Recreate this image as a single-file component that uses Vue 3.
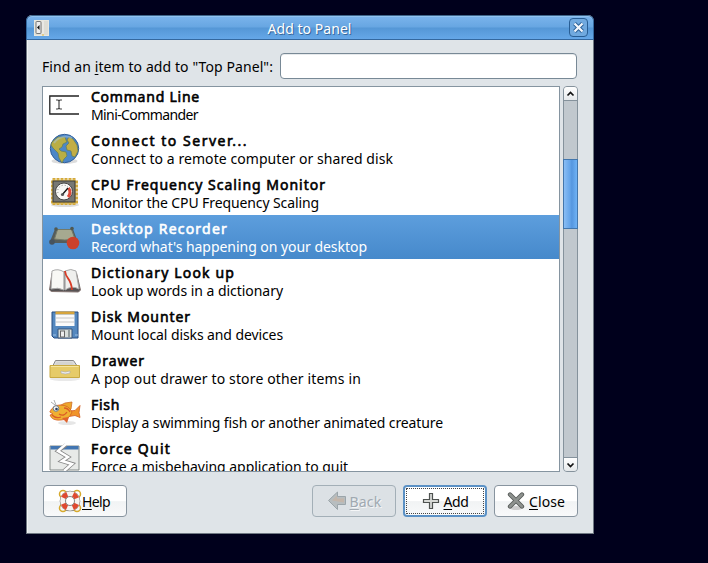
<script setup>
const items = [
  { icon: 'command', name: 'Command Line', text: 'Mini-Commander', a: 109, b: 107 },
  { icon: 'globe', name: 'Connect to Server...', text: 'Connect to a remote computer or shared disk', a: 157, b: 302 },
  { icon: 'cpu', name: 'CPU Frequency Scaling Monitor', text: 'Monitor the CPU Frequency Scaling', a: 235, b: 228 },
  { icon: 'recorder', name: 'Desktop Recorder', text: "Record what's happening on your desktop", a: 137, b: 276, selected: true },
  { icon: 'book', name: 'Dictionary Look up', text: 'Look up words in a dictionary', a: 144, b: 192 },
  { icon: 'disk', name: 'Disk Mounter', text: 'Mount local disks and devices', a: 100, b: 192 },
  { icon: 'drawer', name: 'Drawer', text: 'A pop out drawer to store other items in', a: 54, b: 270 },
  { icon: 'fish', name: 'Fish', text: 'Display a swimming fish or another animated creature', a: 29, b: 352 },
  { icon: 'quit', name: 'Force Quit', text: 'Force a misbehaving application to quit', a: 80, b: 257 },
]

// Tracks each label so that it fills its intended line width.
const vFit = {
  mounted(el, { value }) {
    const width = el.getBoundingClientRect().width
    el.style.letterSpacing = (value - width) / el.textContent.length + 'px'
  },
}
</script>

<template>
  <div class="desktop">
    <div class="window">
      <header class="titlebar">
        <svg class="app-icon" width="15" height="16" viewBox="0 0 15 16">
          <rect x=".5" y=".5" width="14" height="15" fill="#deddd5" stroke="#e9e8df" />
          <rect x="2" y="1.500" width="5" height="12" rx="1" fill="#eee" stroke="#777" />
          <path d="M5.500 5v5L3 7.500z" fill="#111" />
          <path d="M9 1v13" stroke="#f4f4f4" />
          <path d="M8 15h2" stroke="#e2b83e" />
        </svg>
        <h1><span v-fit="84">Add to Panel</span></h1>
        <button class="close" aria-label="Close window">
          <svg width="11" height="11" viewBox="0 0 11 11">
            <path d="M1.500 1.500l8 8M9.500 1.500l-8 8" stroke="#275c93" stroke-width="4" />
            <path d="M1.500 1.500l8 8M9.500 1.500l-8 8" stroke="#f2f7fc" stroke-width="2.300" />
          </svg>
        </button>
      </header>

      <main class="content">
        <div class="search">
          <label for="find"><span v-fit="231">Find an <u>i</u>tem to add to "Top Panel":</span></label>
          <input id="find" type="text" />
        </div>

        <div class="browser">
          <div class="list">
            <div class="rows">
              <div v-for="item in items" :key="item.name" class="row" :class="{ selected: item.selected }">
                <svg class="icon" width="32" height="32" viewBox="0 0 32 32">
                  <g v-if="item.icon === 'command'">
                    <path d="M30 7H.8v18H30" fill="none" stroke="#222" stroke-width="1.300" />
                    <path d="M7 11h2l1 1 1-1h2M10 12v7M7 20h2l1-1 1 1h2" fill="none" stroke="#444" stroke-width="1.200" />
                  </g>
                  <g v-else-if="item.icon === 'globe'">
                    <ellipse cx="15.500" cy="28" rx="13" ry="3" fill="#ddd" />
                    <circle cx="15.500" cy="15.500" r="14.200" fill="#4c87c8" stroke="#315f9a" />
                    <path d="M3 9l6-5 7 0 1 3 1 2-4 2-1 3-3 2 2 2 5 1 1 4-3 3-2 4-3-5-1-5-5-5-2-3z" fill="#b9ae45" stroke="#647e55" stroke-width=".7" />
                    <path d="M20 4l4 2 4 6 1 6-3 6-3-1-1-5-4-1-1-4 3-3-2-3z" fill="#c3ae45" stroke="#647e55" stroke-width=".7" />
                    <path d="M5 10c4-6 12-8 18-5" stroke="#a8c7e5" stroke-width="2" fill="none" opacity=".5" />
                  </g>
                  <g v-else-if="item.icon === 'cpu'">
                    <ellipse cx="16" cy="28" rx="14" ry="2" fill="#ddd" />
                    <path d="M5 1v27M9 1v27M13 1v27M17 1v27M21 1v27M25 1v27M2 5h27M2 9h27M2 13h27M2 17h27M2 21h27M2 25h27" stroke="#d2a83c" stroke-width="3" />
                    <path d="M5 2v25M9 2v25M13 2v25M17 2v25M21 2v25M25 2v25" stroke="#e7c351" />
                    <rect x="4" y="4" width="22" height="21" fill="#777773" stroke="#3b3b38" />
                    <circle cx="15" cy="14.500" r="8.500" fill="#f7f7f5" stroke="#444" />
                    <path d="M9 16a6 6 0 0 1 10-6" fill="none" stroke="#888" stroke-dasharray="1 2" />
                    <path d="M19.500 11c2.500 3 1.500 7-.5 9" fill="none" stroke="#dc4938" stroke-width="3" />
                    <path d="M13 18l6-7" stroke="#111" stroke-width="1.300" />
                    <circle cx="13.500" cy="17.500" r="1.600" fill="#555" />
                  </g>
                  <g v-else-if="item.icon === 'recorder'">
                    <path d="M6 8h18l4 11v3H2v-4z" fill="#555d5b" />
                    <path d="M8.500 8.500h14l3.500 9.500q-10 2-20.500 0z" fill="#a6a990" stroke="#747967" />
                    <circle cx="7" cy="8" r="1.800" fill="#505851" /><circle cx="23" cy="7.500" r="1.800" fill="#505851" />
                    <circle cx="3" cy="21" r="2.800" fill="#46535e" />
                    <circle cx="24" cy="22" r="6.300" fill="#cb412b" />
                  </g>
                  <g v-else-if="item.icon === 'book'">
                    <path d="M3 8L.5 25l2 1.500 27 .5 2-2-4-17z" fill="#575354" stroke="#847572" />
                    <path d="M3 6q6-3 12 1v18q-6-3-13-1z" fill="#f8f8f5" stroke="#aaa" />
                    <path d="M16 6q6-3 11 0l3 18q-7-4-14 1z" fill="#efefed" stroke="#aaa" />
                    <path d="M15.500 6v18" stroke="#999" stroke-width="1.500" />
                    <path d="M16 6c1 9 6 6 7 19" fill="none" stroke="#d83b25" stroke-width="1.800" />
                  </g>
                  <g v-else-if="item.icon === 'disk'">
                    <path d="M3 3h26v26H5l-2-2z" fill="#5488bf" stroke="#274c80" />
                    <path d="M6.500 2.500h19v3h-19z" fill="#d6a43c" />
                    <path d="M6.500 5.500h19V17h-19z" fill="#fafafa" />
                    <path d="M7 9h18M7 13h18" stroke="#c6c6c6" />
                    <path d="M9 20h14v9H9z" fill="#d9dedb" stroke="#395579" />
                    <rect x="11.500" y="22" width="4" height="6" fill="#eee" stroke="#666" /><path d="M20 21v7" stroke="#939c9d" stroke-width="2" />
                    <path d="M4 26h3M26 26h3" stroke="#9fc1e4" />
                  </g>
                  <g v-else-if="item.icon === 'drawer'">
                    <ellipse cx="16" cy="26" rx="15" ry="2" fill="#e9e9e9" />
                    <path d="M6.500 7.500h18l4 6h-25z" fill="#ddd" stroke="#888" />
                    <path d="M8 9h15l2.500 4h-20z" fill="#d4d4d0" />
                    <path d="M1 12.500h29.500v12H1z" fill="#e6cb68" stroke="#c9aa42" />
                    <path d="M2 13.500h27.500" stroke="#f6e59d" />
                    <path d="M12 18q4 2 9 0v2q-5 2-9 0z" fill="#eee" stroke="#aaa" stroke-width=".6" />
                  </g>
                  <g v-else-if="item.icon === 'fish'">
                    <ellipse cx="18" cy="26" rx="9" ry="2" fill="#e6e6e6" />
                    <path d="M10 9l6-3 7-1-1 7-4 3z" fill="#eda62b" stroke="#cf6d28" stroke-width=".8" />
                    <path d="M20 14l6-.5 5-5-1 7 1 5-5-2-6 1z" fill="#f09429" stroke="#d25d23" stroke-width=".8" />
                    <path d="M.8 15Q4 8 11 8q9 0 12 7-3 8-11 8-9 1-11-5l3-1z" fill="#efb031" stroke="#d65d25" stroke-width=".8" />
                    <path d="M13 21l5 5 2-6z" fill="#df632d" />
                    <path d="M10 17q5 3 8-2M3 18q4 4 9 2M15 11q4 0 6 4" fill="none" stroke="#dc5b26" stroke-width="1.300" />
                    <circle cx="7" cy="11.500" r="2.800" fill="#f5f3ed" stroke="#6a8094" /><circle cx="7.500" cy="12" r="1.300" fill="#293c60" />
                    <path d="M2 5l4 3M5 3l2 5" stroke="#999" stroke-width=".8" />
                  </g>
                  <g v-else>
                    <path d="M1 5h29v24H1z" fill="#e8eae8" stroke="#858b88" />
                    <path d="M1.500 5h28v3.500h-28z" fill="#4275b1" />
                    <path d="M17 4l-8 6 10 6-6 4 10 3-8 7" fill="none" stroke="#858585" stroke-width="4" />
                    <path d="M17 3l-8 7 10 6-6 4 10 3-8 7" fill="none" stroke="#fff" stroke-width="2.500" />
                  </g>
                </svg>
                <div class="text">
                  <div class="name"><span v-fit="item.a">{{ item.name }}</span></div>
                  <div class="description"><span v-fit="item.b">{{ item.text }}</span></div>
                </div>
              </div>
            </div>
          </div>
          <div class="scrollbar">
            <button class="arrow up" aria-label="Scroll up">
              <svg width="9" height="6" viewBox="0 0 9 6"><path d="M1.500 4.500l3-3 3 3" fill="none" stroke="#111" stroke-width="1.700" /></svg>
            </button>
            <div class="track"><div class="thumb"></div></div>
            <button class="arrow down" aria-label="Scroll down">
              <svg width="9" height="6" viewBox="0 0 9 6"><path d="M1.500 1.500l3 3 3-3" fill="none" stroke="#111" stroke-width="1.700" /></svg>
            </button>
          </div>
        </div>

        <footer class="actions">
          <button class="button help">
            <svg width="24" height="24" viewBox="0 0 24 24">
              <g fill="none" stroke="#d7a92b" stroke-width="1.500"><circle cx="5" cy="5" r="3.500" /><circle cx="19" cy="5" r="3.500" /><circle cx="5" cy="19" r="3.500" /><circle cx="19" cy="19" r="3.500" /></g>
              <circle cx="12" cy="12" r="10.300" fill="#77736d" />
              <circle cx="12" cy="12" r="7.200" fill="none" stroke="#f5f3f0" stroke-width="5.200" />
              <circle cx="12" cy="12" r="7.200" fill="none" stroke="#df4930" stroke-width="5.200" stroke-dasharray="5.300 6.010" stroke-dashoffset="-3.000" />
              <circle cx="12" cy="12" r="4.500" fill="#fff" stroke="#8a8a86" />
            </svg>
            <span v-fit="28"><u>H</u>elp</span>
          </button>
          <button class="button back" disabled>
            <svg width="20" height="20" viewBox="0 0 20 20">
              <path d="M1.500 9.500l9-8.500v4.500h8v8h-8v5z" fill="#b7bdbf" stroke="#9ba5aa" />
              <path d="M5 9.500l5-5v3h7v4z" fill="#c3b6ab" />
            </svg>
            <span v-fit="32"><u>B</u>ack</span>
          </button>
          <button class="button add">
            <svg width="18" height="18" viewBox="0 0 18 18"><path d="M7.500 1.500h3v6h6v3h-6v6h-3v-6h-6v-3h6z" fill="#d8dad7" stroke="#4e5250" stroke-width="1.200" /></svg>
            <span v-fit="25"><u>A</u>dd</span>
          </button>
          <button class="button dismiss">
            <svg width="18" height="18" viewBox="0 0 18 18">
              <ellipse cx="9" cy="16" rx="6" ry="2" fill="#ccc" />
              <path d="M3 2.500l12 12M15 2.500l-12 12" stroke="#555957" stroke-width="4.300" stroke-linecap="round" />
              <path d="M3 2.500l12 12M15 2.500l-12 12" stroke="#8e928f" stroke-width="2.500" stroke-linecap="round" />
            </svg>
            <span v-fit="36"><u>C</u>lose</span>
          </button>
        </footer>
      </main>
    </div>
  </div>
</template>

<style>
body { margin: 0; background: #00001c; }
</style>

<style scoped>
* { box-sizing: border-box; }
.desktop {
  height: 563px;
  padding: 15px 0 0 26px;
  overflow: hidden;
  background: #00001c;
  color: #000;
  font: 14px/18px "Noto Sans", "DejaVu Sans", sans-serif;
}
button, input { margin: 0; font: inherit; color: inherit; }
svg { display: block; flex: none; }
span { white-space: nowrap; }
u { text-decoration-thickness: 1px; text-underline-offset: 2px; }
.window {
  width: 568px;
  height: 519px;
  border: 1px solid #707983;
  border-top: 0;
  border-radius: 6px 6px 0 0;
  background: #dfe4e8;
  box-shadow: inset 1px 0 #f1f3f4;
}
.titlebar {
  display: flex;
  align-items: center;
  height: 25px;
  margin: 0 -1px;
  padding: 0 6px 0 7px;
  border: 1px solid #34689f;
  border-top-color: #3d6489;
  border-radius: 6px 6px 0 0;
  background: linear-gradient(#7bb4ec 0, #67a6e2 48%, #5597d6 52%, #65a7e8);
  box-shadow: inset 0 1px #91c2ef;
}
h1 {
  flex: 1;
  margin: 2px 0 0 1px;
  color: #fff;
  font-size: 14px;
  font-weight: 400;
  line-height: 18px;
  text-align: center;
  text-shadow: 1px 1px #386799;
}
.close {
  display: grid;
  place-items: center;
  width: 19px;
  height: 19px;
  padding: 0;
  border: 1px solid #285e95;
  border-radius: 4px;
  background: #70a9df;
  margin-right: -1px;
}
.content { padding: 13px 15px 0; }
.search { display: flex; align-items: center; justify-content: space-between; height: 26px; }
label { padding-top: 1px; }
input {
  width: 297px;
  height: 26px;
  margin-right: 1px;
  padding: 0 5px;
  border: 1px solid #788996;
  border-radius: 4px;
  background: #fff;
  box-shadow: inset 0 1px #e7eaec;
}
.browser { display: flex; gap: 3px; height: 386px; margin-top: 7px; }
.list { width: 518px; overflow: hidden; border: 1px solid #8594a0; background: #fff; }
.rows { margin-top: -4px; }
.row { display: flex; height: 44px; padding: 6px 6px 0; }
.row.selected { color: #fff; background: linear-gradient(#5d9edd, #4689cb); }
.text { margin: -1px 0 0 10px; }
.name, .description { height: 18px; }
.name { -webkit-text-stroke: .6px currentColor; }
.scrollbar {
  display: flex;
  flex-direction: column;
  width: 15px;
  border: 1px solid #85929c;
  border-radius: 4px;
  background: #c1c8ce;
}
.arrow { display: grid; place-items: center; width: 13px; height: 14px; padding: 0; border: 0; background: linear-gradient(#fff, #e6e9eb); }
.up { border-bottom: 1px solid #85929c; border-radius: 3px 3px 0 0; }
.down { border-top: 1px solid #85929c; border-radius: 0 0 3px 3px; }
.track { flex: 1; padding-top: 58px; }
.thumb { height: 70px; margin: 0 -1px; border: 1px solid #4276ac; background: linear-gradient(90deg, #89bdf4, #65a5ea 45%, #5596df 60%, #6fb2f5); }
.actions { display: flex; gap: 7px; margin-top: 13px; padding-left: 1px; }
.button {
  display: flex;
  align-items: center;
  justify-content: center;
  gap: 3px;
  width: 84px;
  height: 32px;
  padding: 2px 0 0;
  border: 1px solid #88949f;
  border-radius: 4px;
  background: linear-gradient(#fff 0 50%, #f1f3f4 52%, #f8f9fa);
}
.help { gap: 0; margin-right: auto; padding-right: 2px; }
.help svg, .back svg { margin-top: -2px; }
.back { color: #a0a9b1; border-color: #a3afb7; background: #dce1e5; text-shadow: 1px 1px #f5f6f7; }
.add { border: 2px solid #5b91c5; outline: 1px dotted #444; outline-offset: -4px; padding-top: 1px; gap: 4px; }
.add svg, .dismiss svg { margin-top: -2px; }
.dismiss { gap: 4px; }
</style>
